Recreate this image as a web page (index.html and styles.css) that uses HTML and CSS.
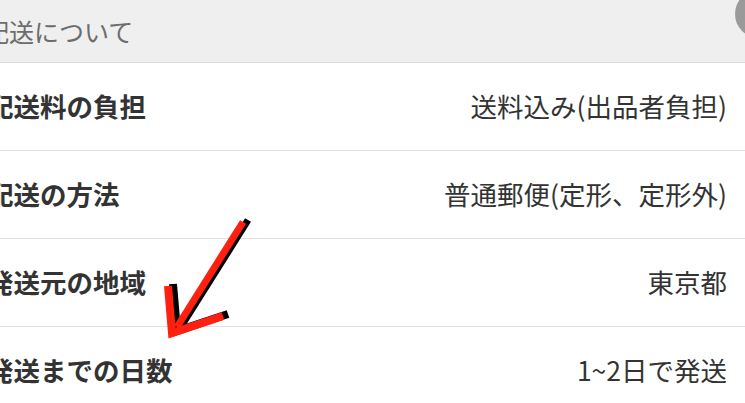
FILE: index.html
```html
<!DOCTYPE html>
<html lang="ja">
<head>
<meta charset="utf-8">
<link rel="stylesheet" href="styles.css">
</head>
<body>
<div class="page">
  <div class="section-header"><span class="section-title">配送について</span></div>
  <div class="row"><span class="label">配送料の負担</span><span class="value">送料込み(出品者負担)</span></div>
  <div class="row"><span class="label">配送の方法</span><span class="value">普通郵便(定形、定形外)</span></div>
  <div class="row"><span class="label">発送元の地域</span><span class="value">東京都</span></div>
  <div class="row"><span class="label">発送までの日数</span><span class="value">1~2日で発送</span></div>
  <div class="avatar"></div>
  <svg class="arrow" width="745" height="403" viewBox="0 0 745 403">
    <g fill="none" stroke="#000" stroke-linejoin="miter" stroke-linecap="butt" transform="translate(5,-2)">
      <path d="M243 222 L177 327" stroke-width="7"/>
      <path d="M168 286 L172 333 L223 316" stroke-width="8"/>
    </g>
    <g fill="none" stroke="#ff2010" stroke-linejoin="miter" stroke-linecap="butt">
      <path d="M243 222 L177 327" stroke-width="7"/>
      <path d="M168 286 L172 333 L223 316" stroke-width="8"/>
    </g>
  </svg>
</div>
</body>
</html>
```

FILE: styles.css
```css
html, body {
  margin: 0;
  padding: 0;
  background: #ffffff;
}
.page {
  position: relative;
  width: 745px;
  height: 403px;
  overflow: hidden;
  font-family: "Noto Sans CJK JP", "Noto Sans", sans-serif;
}
.section-header {
  height: 62px;
  background: #efefef;
  border-bottom: 1px solid #dcdcdc;
  display: flex;
  align-items: center;
}
.section-title {
  margin-left: -16px;
  font-size: 25px;
  font-weight: 400;
  color: #6c6c6c;
  line-height: 1;
}
.row {
  height: 87px;
  border-bottom: 1px solid #e2e2e2;
  display: flex;
  align-items: center;
  justify-content: space-between;
  padding-right: 18px;
}
.label {
  margin-left: -13px;
  font-size: 26.5px;
  font-weight: 700;
  color: #333333;
  line-height: 1;
}
.value {
  font-size: 26.5px;
  color: #333333;
  line-height: 1;
}
.avatar {
  position: absolute;
  left: 735px;
  top: -10px;
  width: 48px;
  height: 48px;
  border-radius: 50%;
  background: #9a9a9a;
}
.arrow {
  position: absolute;
  left: 0;
  top: 0;
}
```
